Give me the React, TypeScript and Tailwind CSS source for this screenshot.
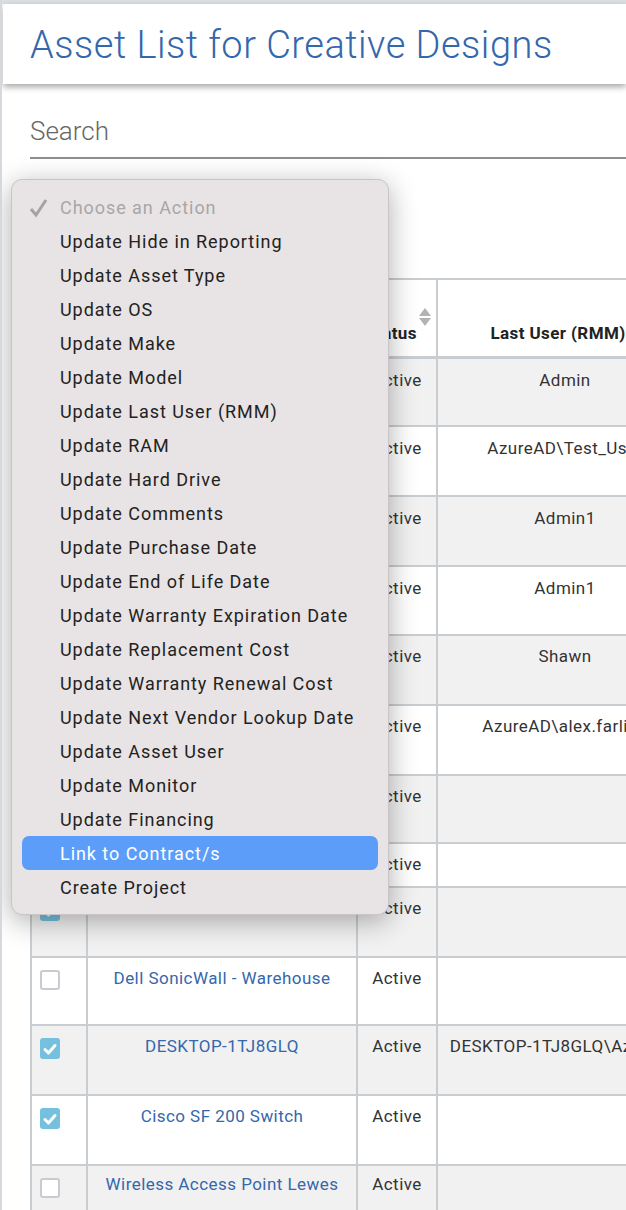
const menuItems = [
  "Update Hide in Reporting",
  "Update Asset Type",
  "Update OS",
  "Update Make",
  "Update Model",
  "Update Last User (RMM)",
  "Update RAM",
  "Update Hard Drive",
  "Update Comments",
  "Update Purchase Date",
  "Update End of Life Date",
  "Update Warranty Expiration Date",
  "Update Replacement Cost",
  "Update Warranty Renewal Cost",
  "Update Next Vendor Lookup Date",
  "Update Asset User",
  "Update Monitor",
  "Update Financing",
];

const rows = [
  { h: "h-[68px]", pt: "pt-[9px]", name: "", user: "Admin", checked: false },
  { h: "h-[70px]", pt: "pt-[9px]", name: "", user: "AzureAD\\Test_User", checked: false },
  { h: "h-[70px]", pt: "pt-[9px]", name: "", user: "Admin1", checked: false },
  { h: "h-[69px]", pt: "pt-[9px]", name: "", user: "Admin1", checked: false },
  { h: "h-[70px]", pt: "pt-[8px]", name: "", user: "Shawn", checked: false },
  { h: "h-[70px]", pt: "pt-[8px]", name: "", user: "AzureAD\\alex.farling", checked: false },
  { h: "h-[68px]", pt: "pt-[8px]", name: "", user: "", checked: false },
  { h: "h-[44px]", pt: "pt-[8px]", name: "", user: "", checked: false },
  { h: "h-[70px]", pt: "pt-[8px]", name: "", user: "", checked: true },
  { h: "h-[68px]", pt: "pt-[8px]", name: "Dell SonicWall - Warehouse", user: "", checked: false },
  { h: "h-[70px]", pt: "pt-[8px]", name: "DESKTOP-1TJ8GLQ", user: "DESKTOP-1TJ8GLQ\\AzureAD", checked: true },
  { h: "h-[70px]", pt: "pt-[8px]", name: "Cisco SF 200 Switch", user: "", checked: true },
  { h: "h-[70px]", pt: "pt-[6px]", name: "Wireless Access Point Lewes", user: "", checked: false },
];

function Checkbox({ checked }: { checked: boolean }) {
  if (checked) {
    return (
      <div className="ml-[8px] flex h-[21px] w-[20px] items-center justify-center rounded-[3px] bg-[#75c0de]">
        <svg viewBox="0 0 20 20" className="h-[20px] w-[20px]" fill="none" stroke="#fff" strokeWidth="3" strokeLinecap="round" strokeLinejoin="round">
          <path d="M5 10.5 8.5 14 15 6.5" />
        </svg>
      </div>
    );
  }
  return <div className="ml-[8px] h-[20px] w-[20px] rounded-[3px] border-2 border-[#c8cbcf] bg-white" />;
}

export default function App() {
  return (
    <div className="relative h-[1210px] w-[626px] overflow-hidden border-l-2 border-[#d5d9dd] bg-white font-['Roboto',sans-serif] text-[#333]">
      <div className="-ml-[2px] h-[4px] bg-[#dcdfe2]" />
      <div className="ml-[1px] flex h-[80px] items-center rounded-tl-[4px] bg-white pl-[27px] pt-[3px] shadow-[0_3px_6px_rgba(0,0,0,0.35)]">
        <h1 className="text-[38px] font-light tracking-[0.5px] text-[#3467ac]">Asset List for Creative Designs</h1>
      </div>

      <div className="ml-[28px] mt-[30px] h-[45px] border-b-2 border-[#8e8e8e] text-[26px] leading-[34px] font-light text-[#666]">Search</div>

      <div className="ml-[28px] mt-[119px] w-[700px] border-l-2 border-t-2 border-[#c8cdd2]">
        <div className="flex h-[79px] border-b-[3px] border-[#c8cdd2] text-[17px] font-bold tracking-[0.4px] text-[#222]">
          <div className="w-[56px] shrink-0 border-r-2 border-[#c8cdd2]" />
          <div className="w-[270px] shrink-0 border-r-2 border-[#c8cdd2]" />
          <div className="flex w-[80px] shrink-0 items-end justify-center border-r-2 border-[#c8cdd2] pb-[10px]">
            <span className="pr-[12px]">Status</span>
          </div>
          <div className="flex w-[256px] shrink-0 items-end justify-center pb-[10px] pr-[16px] whitespace-nowrap">Last User (RMM)</div>
        </div>
        {rows.map((row, i) => (
          <div key={i} className={`flex border-b-2 border-[#c8cdd2] ${row.h} ${i % 2 === 0 ? "bg-[#f1f1f1]" : "bg-white"}`}>
            <div className="w-[56px] shrink-0 border-r-2 border-[#c8cdd2] pt-[12px]">
              <Checkbox checked={row.checked} />
            </div>
            <div className={`w-[270px] shrink-0 border-r-2 border-[#c8cdd2] text-center text-[17px] tracking-[0.45px] text-[#3467ac] ${row.pt}`}>{row.name}</div>
            <div className={`w-[80px] shrink-0 border-r-2 border-[#c8cdd2] text-center text-[17px] tracking-[0.45px] ${row.pt}`}>Active</div>
            <div className={`flex w-[256px] shrink-0 justify-center pr-[2px] text-[17px] tracking-[0.45px] whitespace-nowrap ${row.pt}`}>{row.user}</div>
          </div>
        ))}
      </div>

      <div className="absolute left-[417px] top-[308px] flex flex-col gap-[2px]">
        <div className="h-0 w-0 border-x-[6px] border-b-[8px] border-x-transparent border-b-[#b3b3b3]" />
        <div className="h-0 w-0 border-x-[6px] border-t-[8px] border-x-transparent border-t-[#b3b3b3]" />
      </div>

      <div className="absolute left-[9px] top-[179px] w-[378px] rounded-[11px] border border-[#c9c5c6] bg-[#e8e3e4] px-[10px] pt-[10px] pb-[10px] text-[18px] tracking-[0.95px] text-[#222] shadow-[0_6px_28px_rgba(0,0,0,0.32)]">
        <div className="relative flex h-[34px] items-center pl-[38px] text-[#a9a6a7]">
          <svg viewBox="0 0 20 20" className="absolute left-[7px] top-[8px] h-[20px] w-[20px]" fill="none" stroke="#a5a2a3" strokeWidth="3">
            <path d="M2 11l5 6L17 2" />
          </svg>
          Choose an Action
        </div>
        {menuItems.map((item) => (
          <div key={item} className="flex h-[34px] items-center pl-[38px]">{item}</div>
        ))}
        <div className="flex h-[34px] items-center rounded-[7px] bg-[#5c9dfa] pl-[38px] text-white">Link to Contract/s</div>
        <div className="flex h-[34px] items-center pl-[38px]">Create Project</div>
      </div>
    </div>
  );
}
